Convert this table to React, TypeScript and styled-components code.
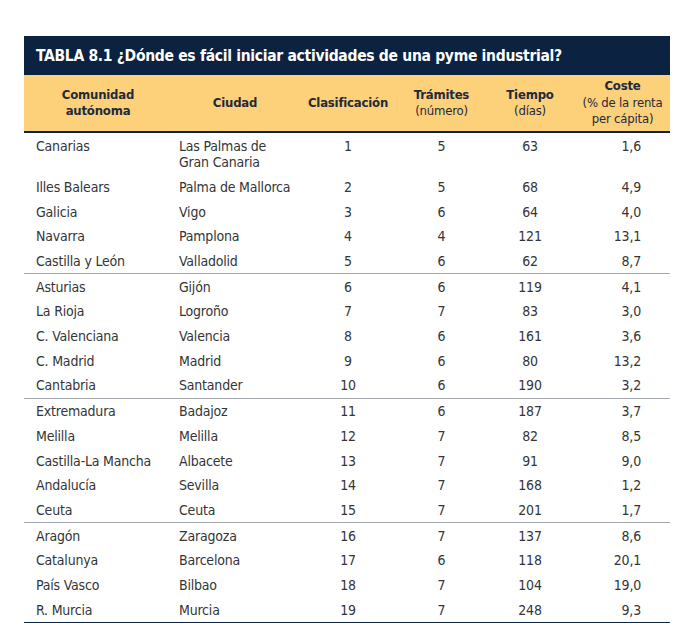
import { createGlobalStyle, styled } from "styled-components";

const GlobalStyle = createGlobalStyle`
  body {
    margin: 0;
    background: #ffffff;
    font-family: "Liberation Sans Narrow", "DejaVu Sans Condensed", "Liberation Sans", sans-serif;
  }
`;

const COLUMNS = "148px 126px 100px 87px 90px 95px";

const Page = styled.div`
  padding: 36px 12px 0 24px;
`;

const Table = styled.div`
  width: 646px;
`;

const Title = styled.div`
  background: #0c2241;
  color: #ffffff;
  height: 39px;
  display: flex;
  align-items: center;
  padding-left: 12px;
  font-size: 15.5px;
  letter-spacing: -0.3px;
  font-weight: 700;
`;

const HeaderRow = styled.div`
  display: grid;
  grid-template-columns: ${COLUMNS};
  align-items: center;
  height: 56px;
  background: #fdd07a;
  border-bottom: 2px solid #0c2241;
  color: #1f2a3c;
  font-size: 13px;
  letter-spacing: -0.2px;
  line-height: 16.5px;
`;

const HeadCell = styled.div`
  text-align: center;
  white-space: nowrap;
`;

const HeadTitle = styled.div`
  font-weight: 700;
`;

const HeadNote = styled.div`
  font-weight: 400;
`;

const Group = styled.div<{ $last?: boolean }>`
  border-bottom: ${(p) => (p.$last ? "2px solid #0c2241" : "1px solid #a3a7ae")};
`;

const Row = styled.div`
  display: grid;
  grid-template-columns: ${COLUMNS};
  align-items: start;
  padding: 4.6px 0 3.4px;
  line-height: 16.7px;
  font-size: 14px;
  letter-spacing: -0.2px;
  color: #333538;
  white-space: nowrap;
`;

const Cell = styled.div<{ $align: "left" | "center" | "right" }>`
  text-align: ${(p) => p.$align};
  padding-left: ${(p) => (p.$align === "left" ? "12px" : "0")};
  padding-right: ${(p) => (p.$align === "right" ? "29px" : "0")};
`;

const CityCell = styled.div`
  padding-left: 7px;
`;

type Item = [string, string, number, number, number, string];

const groups: Item[][] = [
  [
    ["Canarias", "Las Palmas de\nGran Canaria", 1, 5, 63, "1,6"],
    ["Illes Balears", "Palma de Mallorca", 2, 5, 68, "4,9"],
    ["Galicia", "Vigo", 3, 6, 64, "4,0"],
    ["Navarra", "Pamplona", 4, 4, 121, "13,1"],
    ["Castilla y León", "Valladolid", 5, 6, 62, "8,7"],
  ],
  [
    ["Asturias", "Gijón", 6, 6, 119, "4,1"],
    ["La Rioja", "Logroño", 7, 7, 83, "3,0"],
    ["C. Valenciana", "Valencia", 8, 6, 161, "3,6"],
    ["C. Madrid", "Madrid", 9, 6, 80, "13,2"],
    ["Cantabria", "Santander", 10, 6, 190, "3,2"],
  ],
  [
    ["Extremadura", "Badajoz", 11, 6, 187, "3,7"],
    ["Melilla", "Melilla", 12, 7, 82, "8,5"],
    ["Castilla-La Mancha", "Albacete", 13, 7, 91, "9,0"],
    ["Andalucía", "Sevilla", 14, 7, 168, "1,2"],
    ["Ceuta", "Ceuta", 15, 7, 201, "1,7"],
  ],
  [
    ["Aragón", "Zaragoza", 16, 7, 137, "8,6"],
    ["Catalunya", "Barcelona", 17, 6, 118, "20,1"],
    ["País Vasco", "Bilbao", 18, 7, 104, "19,0"],
    ["R. Murcia", "Murcia", 19, 7, 248, "9,3"],
  ],
];

export default function App() {
  return (
    <Page>
      <GlobalStyle />
      <Table>
        <Title>TABLA 8.1 ¿Dónde es fácil iniciar actividades de una pyme industrial?</Title>
        <HeaderRow>
          <HeadCell>
            <HeadTitle>Comunidad</HeadTitle>
            <HeadTitle>autónoma</HeadTitle>
          </HeadCell>
          <HeadCell>
            <HeadTitle>Ciudad</HeadTitle>
          </HeadCell>
          <HeadCell>
            <HeadTitle>Clasificación</HeadTitle>
          </HeadCell>
          <HeadCell>
            <HeadTitle>Trámites</HeadTitle>
            <HeadNote>(número)</HeadNote>
          </HeadCell>
          <HeadCell>
            <HeadTitle>Tiempo</HeadTitle>
            <HeadNote>(días)</HeadNote>
          </HeadCell>
          <HeadCell>
            <HeadTitle>Coste</HeadTitle>
            <HeadNote>(% de la renta</HeadNote>
            <HeadNote>per cápita)</HeadNote>
          </HeadCell>
        </HeaderRow>
        {groups.map((rows, gi) => (
          <Group key={gi} $last={gi === groups.length - 1}>
            {rows.map(([region, city, rank, steps, days, cost]) => (
              <Row key={region}>
                <Cell $align="left">{region}</Cell>
                <CityCell>
                  {city.split("\n").map((line) => (
                    <div key={line}>{line}</div>
                  ))}
                </CityCell>
                <Cell $align="center">{rank}</Cell>
                <Cell $align="center">{steps}</Cell>
                <Cell $align="center">{days}</Cell>
                <Cell $align="right">{cost}</Cell>
              </Row>
            ))}
          </Group>
        ))}
      </Table>
    </Page>
  );
}
